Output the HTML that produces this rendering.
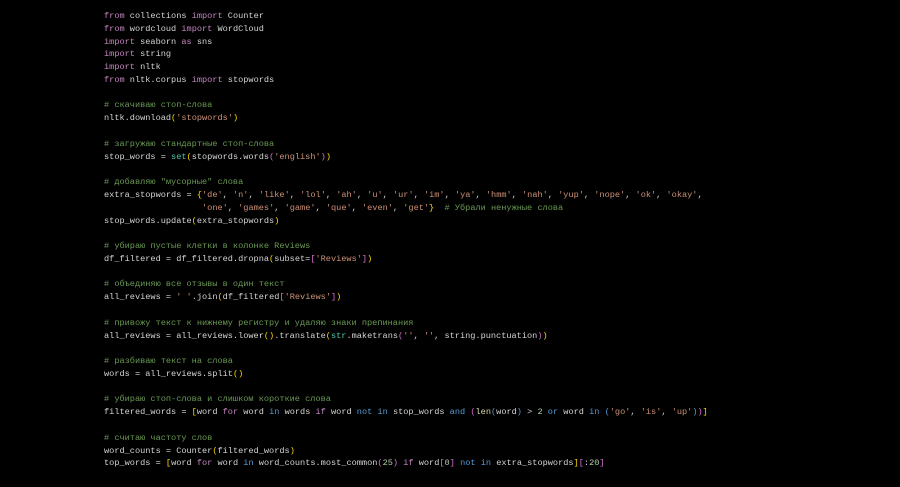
<!DOCTYPE html><html><head><meta charset="utf-8"><style>
html,body{margin:0;background:#000;width:900px;height:487px;overflow:hidden}
pre{margin:0;position:absolute;left:104px;top:10px;font-family:"Liberation Mono","DejaVu Sans Mono",monospace;font-size:8.6px;line-height:12.78px;color:#d4d4d4}
.k{color:#c586c0}.b{color:#569cd6}.s{color:#ce9178}.c{color:#6a9955}.y{color:#ffd700}.p{color:#da70d6}.t{color:#4ec9b0}.n{color:#b5cea8}.f{color:#dcdcaa}
</style></head><body><pre><span class="k">from</span> collections <span class="k">import</span> Counter
<span class="k">from</span> wordcloud <span class="k">import</span> WordCloud
<span class="k">import</span> seaborn <span class="k">as</span> sns
<span class="k">import</span> string
<span class="k">import</span> nltk
<span class="k">from</span> nltk.corpus <span class="k">import</span> stopwords

<span class="c"># скачиваю стоп-слова</span>
nltk.download<span class="y">(</span><span class="s">'stopwords'</span><span class="y">)</span>

<span class="c"># загружаю стандартные стоп-слова</span>
stop_words = <span class="t">set</span><span class="y">(</span>stopwords.words<span class="p">(</span><span class="s">'english'</span><span class="p">)</span><span class="y">)</span>

<span class="c"># добавляю "мусорные" слова</span>
extra_stopwords = <span class="y">{</span><span class="s">'de'</span>, <span class="s">'n'</span>, <span class="s">'like'</span>, <span class="s">'lol'</span>, <span class="s">'ah'</span>, <span class="s">'u'</span>, <span class="s">'ur'</span>, <span class="s">'im'</span>, <span class="s">'ya'</span>, <span class="s">'hmm'</span>, <span class="s">'nah'</span>, <span class="s">'yup'</span>, <span class="s">'nope'</span>, <span class="s">'ok'</span>, <span class="s">'okay'</span>,
                   <span class="s">'one'</span>, <span class="s">'games'</span>, <span class="s">'game'</span>, <span class="s">'que'</span>, <span class="s">'even'</span>, <span class="s">'get'</span><span class="y">}</span>  <span class="c"># Убрали ненужные слова</span>
stop_words.update<span class="y">(</span>extra_stopwords<span class="y">)</span>

<span class="c"># убираю пустые клетки в колонке Reviews</span>
df_filtered = df_filtered.dropna<span class="y">(</span>subset=<span class="p">[</span><span class="s">'Reviews'</span><span class="p">]</span><span class="y">)</span>

<span class="c"># объединяю все отзывы в один текст</span>
all_reviews = <span class="s">' '</span>.join<span class="y">(</span>df_filtered<span class="p">[</span><span class="s">'Reviews'</span><span class="p">]</span><span class="y">)</span>

<span class="c"># привожу текст к нижнему регистру и удаляю знаки препинания</span>
all_reviews = all_reviews.lower<span class="y">()</span>.translate<span class="y">(</span><span class="t">str</span>.maketrans<span class="p">(</span><span class="s">''</span>, <span class="s">''</span>, string.punctuation<span class="p">)</span><span class="y">)</span>

<span class="c"># разбиваю текст на слова</span>
words = all_reviews.split<span class="y">()</span>

<span class="c"># убираю стоп-слова и слишком короткие слова</span>
filtered_words = <span class="y">[</span>word <span class="k">for</span> word <span class="b">in</span> words <span class="k">if</span> word <span class="b">not</span> <span class="b">in</span> stop_words <span class="b">and</span> <span class="p">(</span><span class="f">len</span><span class="b">(</span>word<span class="b">)</span> &gt; <span class="n">2</span> <span class="b">or</span> word <span class="b">in</span> <span class="b">(</span><span class="s">'go'</span>, <span class="s">'is'</span>, <span class="s">'up'</span><span class="b">)</span><span class="p">)</span><span class="y">]</span>

<span class="c"># считаю частоту слов</span>
word_counts = Counter<span class="y">(</span>filtered_words<span class="y">)</span>
top_words = <span class="y">[</span>word <span class="k">for</span> word <span class="b">in</span> word_counts.most_common<span class="p">(</span><span class="n">25</span><span class="p">)</span> <span class="k">if</span> word<span class="p">[</span><span class="n">0</span><span class="p">]</span> <span class="b">not</span> <span class="b">in</span> extra_stopwords<span class="y">]</span><span class="p">[</span>:<span class="n">20</span><span class="p">]</span>
</pre></body></html>
